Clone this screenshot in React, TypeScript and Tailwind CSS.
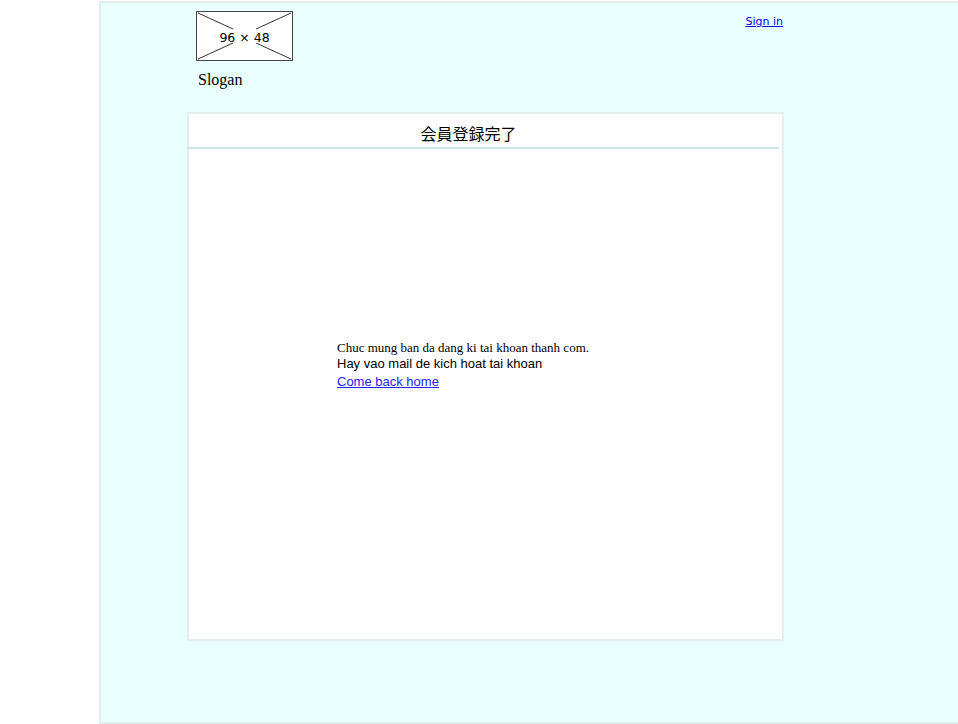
import React from "react";

export default function App() {
  return (
    <div className="w-[958px] h-[724px] bg-white overflow-hidden">
      <div className="ml-[99px] mt-[1px] w-[880px] h-[723px] border-2 border-[#e4ecec] bg-[#e8fffd]">
        <div className="ml-[86px] w-[597px]">
          {/* header */}
          <div className="flex justify-between h-[107px]">
            <div className="pl-[9px] pt-[8px]">
              <div className="relative w-[97px] h-[50px] border border-[#444] bg-white flex items-center justify-center">
                <svg className="absolute inset-0" width="95" height="48" viewBox="0 0 95 48">
                  <line x1="1" y1="1" x2="36" y2="17" stroke="#333" strokeWidth="1" />
                  <line x1="94" y1="1" x2="59" y2="17" stroke="#333" strokeWidth="1" />
                  <line x1="1" y1="47" x2="36" y2="31" stroke="#333" strokeWidth="1" />
                  <line x1="94" y1="47" x2="59" y2="31" stroke="#333" strokeWidth="1" />
                </svg>
                <span className="relative pt-[4px] text-[12.5px] leading-none text-black" style={{ fontFamily: '"DejaVu Sans", sans-serif' }}>96 × 48</span>
              </div>
              <div className="mt-[10px] pl-[2px] text-[16px] leading-[18px] text-black" style={{ fontFamily: '"Liberation Serif", serif' }}>Slogan</div>
            </div>
            <div className="pt-[4px] pr-[1px]">
              <a href="#" className="text-[11px] leading-[14px] text-[#0000ee] underline" style={{ fontFamily: '"DejaVu Sans", sans-serif' }}>Sign in</a>
            </div>
          </div>
          {/* card */}
          <div className="mt-[2px] h-[529px] border-2 border-[#e4eeee] bg-white">
            <div className="pr-[34px] pt-[9px] h-[33px] text-center text-[16px] leading-[20px] text-black" style={{ fontFamily: '"Noto Sans CJK JP", sans-serif' }}>会員登録完了</div>
            <div className="ml-[-2px] mr-[3px] h-[2px] bg-[#cfe4e4]"></div>
            <div className="pl-[148px] pt-[191px]">
              <div className="text-[13px] leading-[15px] text-black" style={{ fontFamily: '"Liberation Serif", serif' }}>Chuc mung ban da dang ki tai khoan thanh com.</div>
              <div className="text-[13px] leading-[16px] pt-[1px] text-black" style={{ fontFamily: '"Liberation Sans", Arial, sans-serif' }}>Hay vao mail de kich hoat tai khoan</div>
              <div className="leading-[16px]">
                <a href="#" className="text-[13px] leading-[16px] text-[#2222ee] underline" style={{ fontFamily: '"Liberation Sans", Arial, sans-serif' }}>Come back home</a>
              </div>
            </div>
          </div>
        </div>
      </div>
    </div>
  );
}
